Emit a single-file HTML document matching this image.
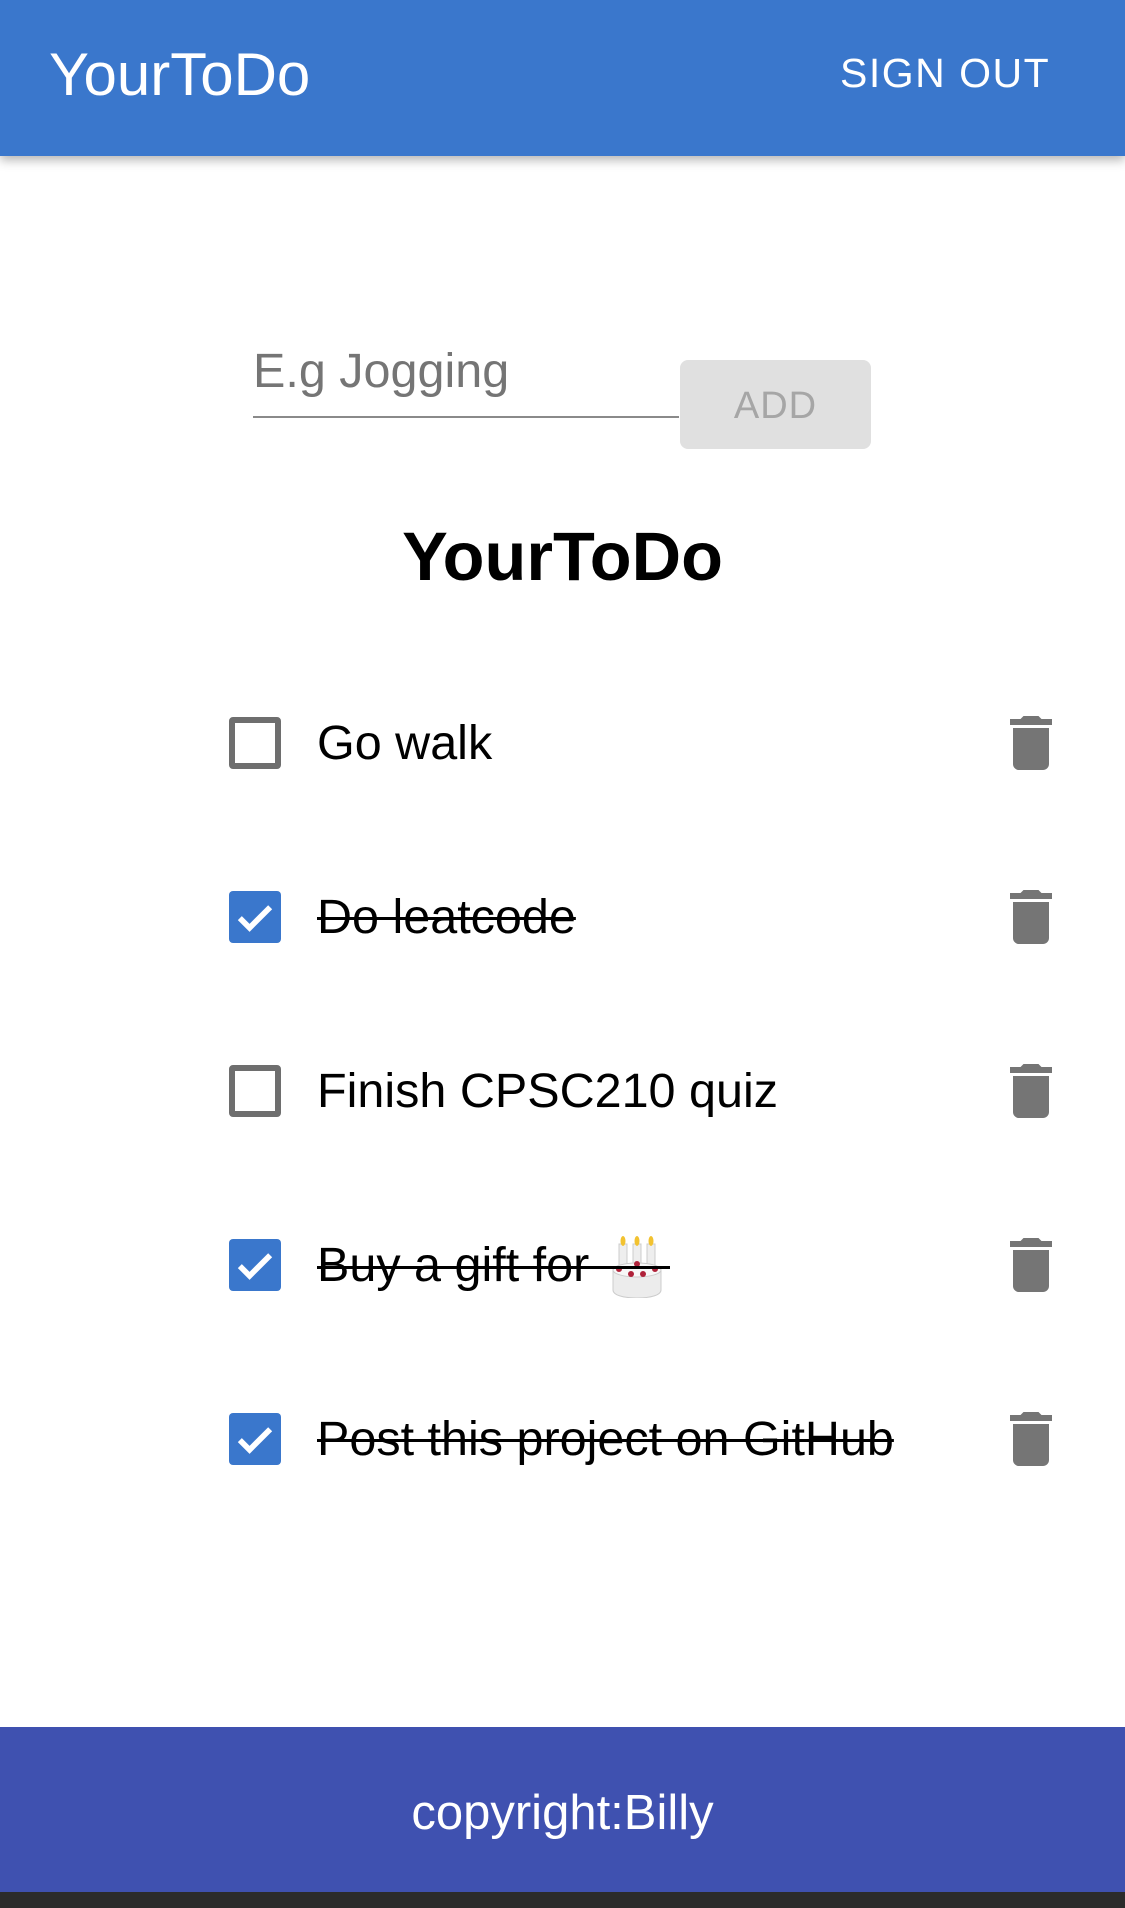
<!DOCTYPE html>
<html><head><meta charset="utf-8"><style>
body{margin:0;width:1125px;height:1908px;position:relative;background:#fff;font-family:"Liberation Sans",sans-serif;overflow:hidden}
.hdr{position:absolute;left:0;top:0;width:1125px;height:156px;background:#3a77cc;box-shadow:0 4px 10px rgba(0,0,0,.3)}
.t{position:absolute;white-space:nowrap}
.cb{position:absolute;left:229px;width:52px;height:52px;box-sizing:border-box;border-radius:4px}
.un{border:6px solid #6e6e6e}
.ck{background:#3a77cc}
.row{font-size:48.5px;color:#000;left:317px}
.s{text-decoration:line-through;text-decoration-thickness:3px}
.tr{position:absolute;left:995px;width:72px;height:72px}
</style></head><body>
<div class="hdr"></div>
<div class="t" style="left:49px;top:40px;font-size:60px;color:#fff">YourToDo</div>
<div class="t" style="left:840px;top:50px;font-size:41px;color:#fff;letter-spacing:1.5px">SIGN OUT</div>
<div class="t" style="left:253px;top:343px;font-size:48.5px;color:#757575">E.g Jogging</div>
<div style="position:absolute;left:253px;top:416px;width:426px;height:2px;background:#8a8a8a"></div>
<div style="position:absolute;left:680px;top:360px;width:191px;height:89px;background:#e0e0e0;border-radius:8px"></div>
<div class="t" style="left:680px;width:191px;text-align:center;top:385px;font-size:38px;color:#a6a6a6;letter-spacing:1px">ADD</div>
<div class="t" style="left:0;width:1125px;text-align:center;top:517px;font-size:68.5px;font-weight:bold;color:#000">YourToDo</div>

<div class="cb un" style="top:717px"></div>
<div class="t row" style="top:715px">Go walk</div>
<div class="cb ck" style="top:891px"><svg width="52" height="52" viewBox="0 0 24 24"><path d="M5 12.5l4.5 4.5L19 7.5" stroke="#fff" stroke-width="2.6" fill="none"/></svg></div>
<div class="t row s" style="top:889px">Do leatcode</div>
<div class="cb un" style="top:1065px"></div>
<div class="t row" style="top:1063px">Finish CPSC210 quiz</div>
<div class="cb ck" style="top:1239px"><svg width="52" height="52" viewBox="0 0 24 24"><path d="M5 12.5l4.5 4.5L19 7.5" stroke="#fff" stroke-width="2.6" fill="none"/></svg></div>
<div class="t row" style="top:1237px">Buy a gift for</div>
<svg style="position:absolute;left:606px;top:1236px" width="62" height="62" viewBox="0 0 56 62"><rect x="10" y="8" width="8" height="28" fill="#eee" stroke="#ccc"/><rect x="24" y="8" width="8" height="28" fill="#eee" stroke="#ccc"/><rect x="38" y="8" width="8" height="28" fill="#eee" stroke="#ccc"/><ellipse cx="14" cy="5" rx="2.5" ry="5" fill="#f2c230"/><ellipse cx="28" cy="5" rx="2.5" ry="5" fill="#f2c230"/><ellipse cx="42" cy="5" rx="2.5" ry="5" fill="#f2c230"/><path d="M4 34h48v20c0 5-10 8-24 8S4 59 4 54z" fill="#ececec" stroke="#ccc"/><ellipse cx="28" cy="34" rx="24" ry="7" fill="#f8f8f8" stroke="#ccc"/><circle cx="10" cy="33" r="3" fill="#b0223a"/><circle cx="22" cy="38" r="3" fill="#b0223a"/><circle cx="34" cy="38" r="3" fill="#b0223a"/><circle cx="46" cy="33" r="3" fill="#b0223a"/><circle cx="28" cy="28" r="3" fill="#b0223a"/></svg>
<div style="position:absolute;left:317px;top:1266px;width:353px;height:3px;background:#000"></div>
<div class="cb ck" style="top:1413px"><svg width="52" height="52" viewBox="0 0 24 24"><path d="M5 12.5l4.5 4.5L19 7.5" stroke="#fff" stroke-width="2.6" fill="none"/></svg></div>
<div class="t row s" style="top:1411px">Post this project on GitHub</div>

<svg class="tr" style="top:707px" viewBox="0 0 24 24"><path fill="#757575" d="M6 19c0 1.1.9 2 2 2h8c1.1 0 2-.9 2-2V7H6v12zM19 4h-3.5l-1-1h-5l-1 1H5v2h14V4z"/></svg>
<svg class="tr" style="top:881px" viewBox="0 0 24 24"><path fill="#757575" d="M6 19c0 1.1.9 2 2 2h8c1.1 0 2-.9 2-2V7H6v12zM19 4h-3.5l-1-1h-5l-1 1H5v2h14V4z"/></svg>
<svg class="tr" style="top:1055px" viewBox="0 0 24 24"><path fill="#757575" d="M6 19c0 1.1.9 2 2 2h8c1.1 0 2-.9 2-2V7H6v12zM19 4h-3.5l-1-1h-5l-1 1H5v2h14V4z"/></svg>
<svg class="tr" style="top:1229px" viewBox="0 0 24 24"><path fill="#757575" d="M6 19c0 1.1.9 2 2 2h8c1.1 0 2-.9 2-2V7H6v12zM19 4h-3.5l-1-1h-5l-1 1H5v2h14V4z"/></svg>
<svg class="tr" style="top:1403px" viewBox="0 0 24 24"><path fill="#757575" d="M6 19c0 1.1.9 2 2 2h8c1.1 0 2-.9 2-2V7H6v12zM19 4h-3.5l-1-1h-5l-1 1H5v2h14V4z"/></svg>

<div style="position:absolute;left:0;top:1727px;width:1125px;height:165px;background:#3f51b0"></div>
<div style="position:absolute;left:0;top:1892px;width:1125px;height:16px;background:#2b2b2b"></div>
<div class="t" style="left:0;width:1125px;text-align:center;top:1785px;font-size:49px;color:#fff">copyright:Billy</div>
</body></html>
